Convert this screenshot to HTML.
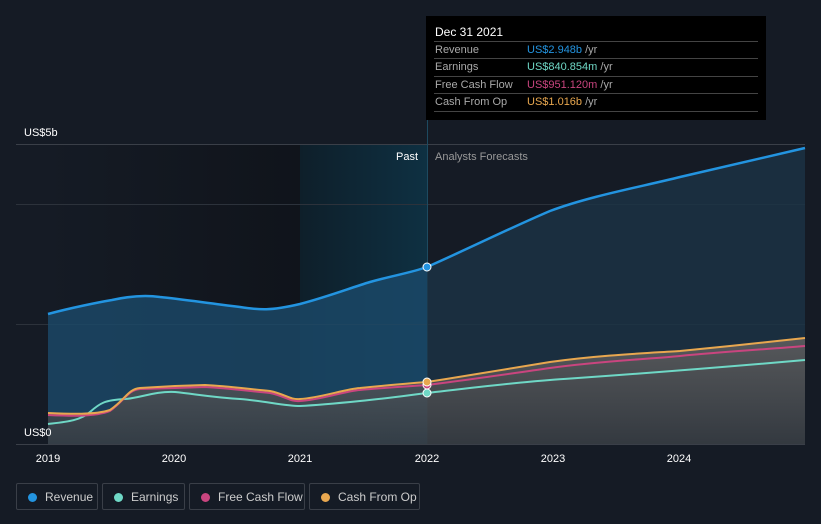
<!DOCTYPE html>
<html><head><style>
body{margin:0;background:#151b25;font-family:"Liberation Sans",sans-serif;}
.wrap{position:relative;width:821px;height:524px;overflow:hidden;background:#151b25}
.tt{position:absolute;left:426px;top:16px;width:340px;height:104px;background:#000;color:#ccc;font-size:11px}
.tt .h{position:absolute;left:9px;top:9px;color:#fff;font-size:12px}
.tt .r{position:absolute;left:8px;width:324px;border-top:1px solid #444;height:17px;line-height:17px}
.tt .r span.l{position:absolute;left:1px;color:#aaa}
.tt .r span.v{position:absolute;left:93px;color:#aaa}
.leg{position:absolute;top:483px;height:27px;border:1px solid #3a3f48;border-radius:2px;color:#ccc;font-size:12px;line-height:27px;box-sizing:border-box}
.leg i{position:absolute;left:11px;top:9px;width:9px;height:9px;border-radius:50%}
.leg span{position:absolute;left:28px}
</style></head><body><div class="wrap">
<svg width="821" height="524" style="position:absolute;left:0;top:0">
<defs>
<linearGradient id="dk" x1="0" x2="1"><stop offset="0" stop-color="#151b25"/><stop offset="1" stop-color="#10141b"/></linearGradient>
<linearGradient id="hl" x1="0" x2="1"><stop offset="0" stop-color="#0e1f2a"/><stop offset="1" stop-color="#0e3042"/></linearGradient>
<linearGradient id="gr" x1="0" y1="0" x2="0" y2="1"><stop offset="0" stop-color="#6a6664" stop-opacity=".75"/><stop offset="1" stop-color="#3a3c40" stop-opacity=".8"/></linearGradient>
</defs>
<rect x="48" y="144" width="252" height="300" fill="url(#dk)"/>
<rect x="300" y="144" width="127" height="300" fill="url(#hl)"/>
<line x1="16" y1="144.5" x2="805" y2="144.5" stroke="#3a3f48"/>
<line x1="16" y1="204.5" x2="805" y2="204.5" stroke="#2c323b"/>
<line x1="16" y1="324.5" x2="805" y2="324.5" stroke="#2c323b"/>
<line x1="427.5" y1="16" x2="427.5" y2="444" stroke="#1d4a60"/>
<path d="M48,314 C70,308 100,302 112,300 C130,296 145,295 160,297 C180,299 200,302 240,307 C260,310 270,311 300,304 C330,296 350,288 370,282 C395,275 410,273 427,267 L427,444 L48,444Z" fill="#1c4a6a" fill-opacity=".8"/>
<path d="M427,267 C470,248 510,228 550,211 C590,196 640,187 680,177 C730,165 770,156 805,148 L805,444 L427,444Z" fill="#1c3346" fill-opacity=".8"/>
<path d="M48,413 C70,414 95,415 110,410 C125,400 128,389 140,388 L175,386 L205,385 C225,386 240,388 270,391 C285,394 290,400 300,399 C320,398 345,389 360,388 C380,386 400,384 427,382 C460,377 480,373 550,362 C600,355 650,353 680,351 C720,347 770,342 805,338 L805,444 L48,444Z" fill="url(#gr)"/>
<path d="M48,314 C70,308 100,302 112,300 C130,296 145,295 160,297 C180,299 200,302 240,307 C260,310 270,311 300,304 C330,296 350,288 370,282 C395,275 410,273 427,267 C470,248 510,228 550,211 C590,196 640,187 680,177 C730,165 770,156 805,148" fill="none" stroke="#2394e0" stroke-width="2.5"/>
<path d="M48,424 C65,422 80,421 90,412 C100,403 105,400 125,399 C140,398 155,391 175,392 C195,394 210,397 240,399 C265,401 285,406 300,406 C320,405 340,403 360,401 C390,398 410,395 427,393 C470,388 510,383 550,380 C620,375 680,371 805,360" fill="none" stroke="#6fd8c6" stroke-width="2"/>
<path d="M48,415 C70,416 95,417 110,411 C125,400 128,390 140,389 L175,388 L205,387 C225,388 240,390 270,393 C285,396 290,402 300,401 C320,400 345,391 360,390 C380,388 400,387 427,385 C460,381 480,378 550,368 C600,361 650,359 680,356 C720,352 770,349 805,346" fill="none" stroke="#c9457f" stroke-width="2"/>
<path d="M48,413 C70,414 95,415 110,410 C125,400 128,389 140,388 L175,386 L205,385 C225,386 240,388 270,391 C285,394 290,400 300,399 C320,398 345,389 360,388 C380,386 400,384 427,382 C460,377 480,373 550,362 C600,355 650,353 680,351 C720,347 770,342 805,338" fill="none" stroke="#e8a74f" stroke-width="2"/>
<line x1="16" y1="444.5" x2="805" y2="444.5" stroke="#3a3f48"/>
<circle cx="427" cy="267" r="4" fill="#2394e0" stroke="#fff" stroke-width="1"/>
<circle cx="427" cy="393" r="4" fill="#6fd8c6" stroke="#fff" stroke-width="1"/>
<circle cx="427" cy="385" r="4" fill="#c9457f" stroke="#fff" stroke-width="1"/>
<circle cx="427" cy="382" r="4" fill="#e8a74f" stroke="#fff" stroke-width="1"/>
<g font-family="Liberation Sans" font-size="11" fill="#fff">
<text x="24" y="136">US$5b</text>
<text x="24" y="436">US$0</text>
<text x="396" y="160">Past</text>
<text x="435" y="160" fill="#999">Analysts Forecasts</text>
<g text-anchor="middle"><text x="48" y="462">2019</text><text x="174" y="462">2020</text><text x="300" y="462">2021</text><text x="427" y="462">2022</text><text x="553" y="462">2023</text><text x="679" y="462">2024</text></g>
</g>
</svg>
<div class="tt"><div class="h">Dec 31 2021</div>
<div class="r" style="top:25px"><span class="l">Revenue</span><span class="v"><b style="font-weight:normal;color:#2394e0">US$2.948b</b> /yr</span></div>
<div class="r" style="top:42px"><span class="l">Earnings</span><span class="v"><b style="font-weight:normal;color:#6fd8c6">US$840.854m</b> /yr</span></div>
<div class="r" style="top:60px"><span class="l">Free Cash Flow</span><span class="v"><b style="font-weight:normal;color:#c9457f">US$951.120m</b> /yr</span></div>
<div class="r" style="top:77px;border-bottom:1px solid #444"><span class="l">Cash From Op</span><span class="v"><b style="font-weight:normal;color:#e8a74f">US$1.016b</b> /yr</span></div>
</div>
<div class="leg" style="left:16px;width:82px"><i style="background:#2394e0"></i><span>Revenue</span></div>
<div class="leg" style="left:102px;width:83px"><i style="background:#6fd8c6"></i><span>Earnings</span></div>
<div class="leg" style="left:189px;width:116px"><i style="background:#c9457f"></i><span>Free Cash Flow</span></div>
<div class="leg" style="left:309px;width:111px"><i style="background:#e8a74f"></i><span>Cash From Op</span></div>
</div></body></html>
